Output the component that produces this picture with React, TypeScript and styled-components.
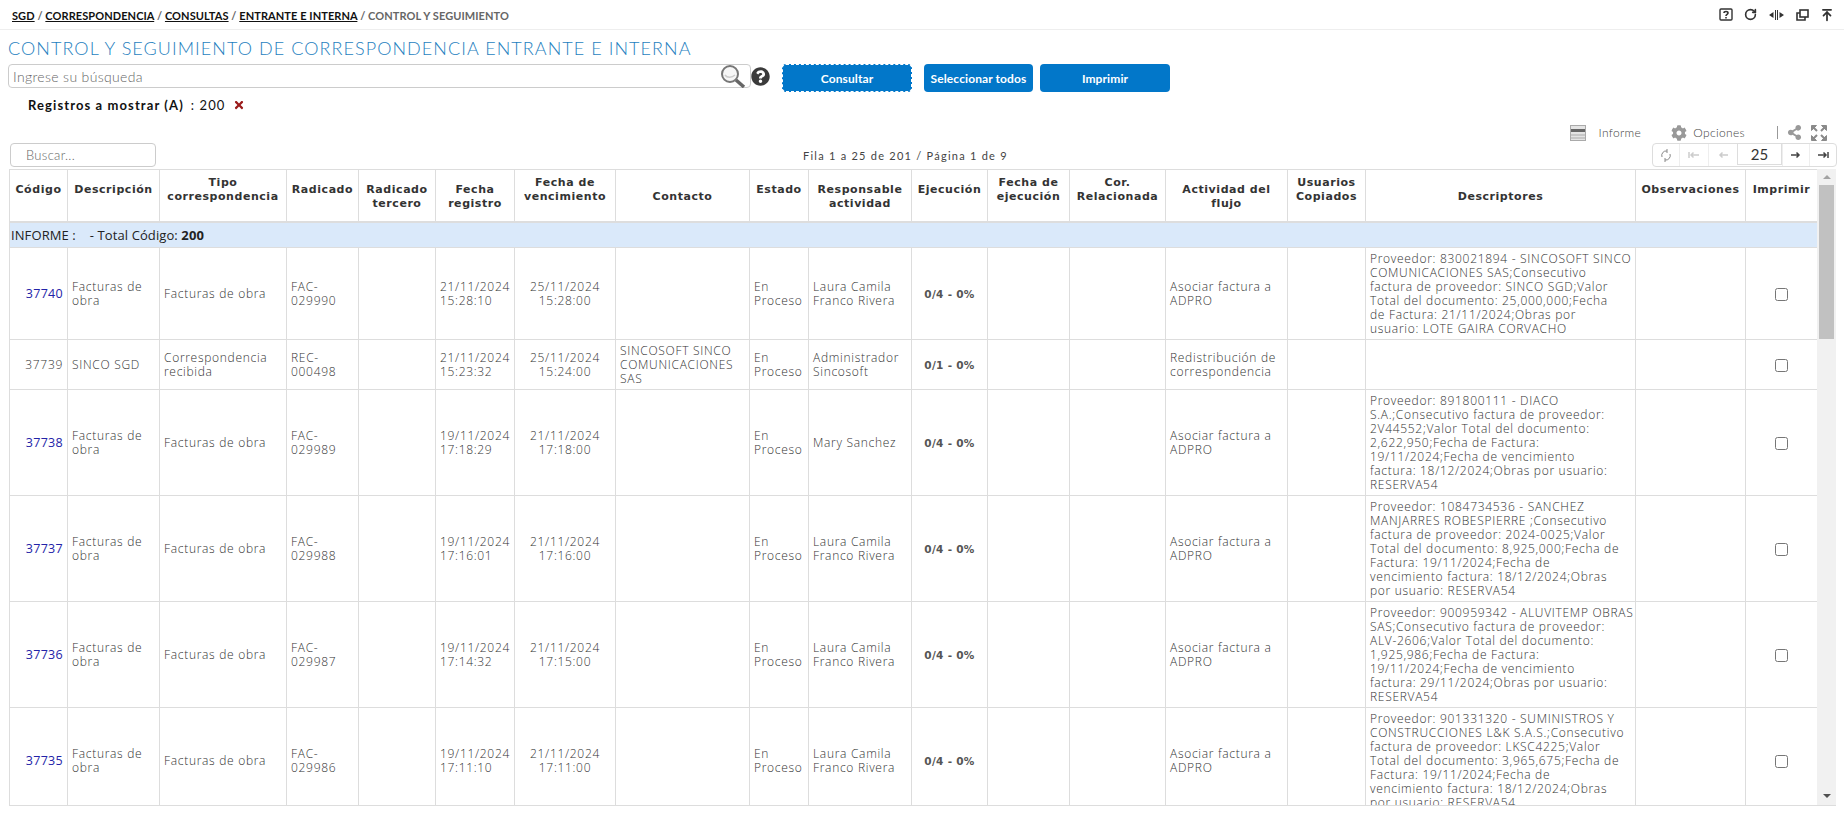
import {Fragment} from "react";
import styled, {createGlobalStyle} from "styled-components";
import {FaCog, FaQuestionCircle, FaShareAlt, FaTimes} from "react-icons/fa";
import {ArrowUpToLine, RotateCw} from "lucide-react";

const GlobalStyle = createGlobalStyle`
  html, body {
    margin: 0;
    padding: 0;
    background: #fff;
    font-family: "Lato", "Liberation Sans", sans-serif;
    color: #555;
  }
`;

const Page = styled.div`
  width: 1844px;
  height: 825px;
  overflow: hidden;
`;

const TopBar = styled.div`
  height: 29px;
  border-bottom: 1px solid #eee;
  padding: 0 10px 0 12px;
  display: flex;
  align-items: center;
  justify-content: space-between;
`;

const Crumbs = styled.div`
  font-size: 11px;
  font-weight: 700;
  color: #666;
  padding-top: 2px;
  letter-spacing: 0.08px;
  a {
    color: #111;
    text-decoration: underline;
  }
`;

const TopIcons = styled.div`
  display: flex;
  align-items: center;
  gap: 11px;
  color: #333;
  svg {
    display: block;
  }
`;

const Title = styled.h1`
  margin: 0;
  padding: 7px 0 0 8px;
  height: 27px;
  font-size: 18px;
  line-height: 22px;
  font-weight: 300;
  color: #1f7fc0;
  letter-spacing: 1.06px;
`;

const SearchRow = styled.div`
  display: flex;
  align-items: flex-start;
  padding: 0 0 0 8px;
`;

const SearchBox = styled.div`
  width: 743px;
  height: 24px;
  box-sizing: border-box;
  border: 1px solid #ccc;
  border-radius: 4px;
  display: flex;
  align-items: center;
  justify-content: space-between;
  padding: 0 3px 0 4px;
  font-size: 14px;
  font-weight: 300;
  letter-spacing: 0.35px;
  color: #666;
`;

const HelpBadge = styled.span`
  width: 19px;
  margin: 3px 12px 0 0;
  color: #3b3b3b;
  display: flex;
  svg {
    display: block;
  }
`;

const ActionButton = styled.button<{$focused?: boolean; $w: number; $gap: number}>`
  width: ${p => p.$w}px;
  height: 28px;
  margin-left: ${p => p.$gap}px;
  box-sizing: border-box;
  border: ${p => (p.$focused ? "1px dashed #fff" : "none")};
  border-radius: 4px;
  background: #0277c9;
  color: #fff;
  font-family: "Lato", sans-serif;
  font-size: 12px;
  font-weight: 700;
  letter-spacing: 0.1px;
  padding: 0;
`;

const Registros = styled.div`
  height: 28px;
  padding: 0 0 0 28px;
  display: flex;
  align-items: center;
  gap: 7px;
  font-size: 13px;
  letter-spacing: 1.1px;
  color: #111;
  margin-top: -1px;
  b {
    font-weight: 700;
  }
  svg {
    color: #9b1c1c;
  }
`;

const ToolRow = styled.div`
  height: 21px;
  margin-top: 3px;
  display: flex;
  align-items: center;
  justify-content: flex-end;
  padding-right: 17px;
  font-size: 12px;
  font-weight: 300;
  letter-spacing: 0.35px;
  color: #444;
`;

const ToolLabel = styled.span<{$gap: number}>`
  margin-left: ${p => p.$gap}px;
`;

const ToolIcon = styled.span<{$gap: number}>`
  margin-left: ${p => p.$gap}px;
  display: flex;
  color: #999;
  svg {
    display: block;
  }
`;

const ToolDivider = styled.span`
  width: 1px;
  height: 13px;
  background: #999;
  margin-left: 32px;
`;

const FilterRow = styled.div`
  height: 26px;
  padding: 0 7px 0 10px;
  display: flex;
  align-items: flex-start;
`;

const FilterBox = styled.div`
  width: 146px;
  height: 24px;
  box-sizing: border-box;
  border: 1px solid #ccc;
  border-radius: 4px;
  padding-left: 15px;
  font-size: 13px;
  font-weight: 300;
  line-height: 23px;
  letter-spacing: 0.3px;
  color: #666;
`;

const RowInfo = styled.div`
  margin-left: 647px;
  width: 210px;
  font-size: 11px;
  line-height: 26px;
  letter-spacing: 1.25px;
  color: #444;
  white-space: nowrap;
`;

const Pager = styled.div`
  margin-left: auto;
  display: flex;
  align-items: stretch;
  height: 24px;
  box-sizing: border-box;
  border: 1px solid #ddd;
  border-radius: 4px;
`;

const PagerBtn = styled.span<{$w: number; $dim?: boolean}>`
  width: ${p => p.$w}px;
  display: flex;
  align-items: center;
  justify-content: center;
  border-left: 1px solid #eee;
  color: ${p => (p.$dim ? "#ccc" : "#444")};
  &:first-child {
    border-left: none;
  }
`;

const PagerInput = styled.span`
  width: 45px;
  margin: -1px 0 1px;
  box-sizing: border-box;
  border: 1px solid #ddd;
  font-size: 15px;
  line-height: 21px;
  text-align: center;
  color: #333;
  background: #fff;
`;

const TableShell = styled.div`
  margin-left: 9px;
  width: 1827px;
  height: 637px;
  display: flex;
  border-bottom: 1px solid #ddd;
  box-sizing: border-box;
`;

const Viewport = styled.div`
  width: 1808px;
  overflow: hidden;
`;

const Grid = styled.table`
  width: 1808px;
  table-layout: fixed;
  border-collapse: collapse;
  border: 1px solid #ddd;
`;

const HeadCell = styled.th<{$raised?: boolean}>`
  height: 52px;
  box-sizing: border-box;
  border: 1px solid #ddd;
  border-bottom-width: 2px;
  padding: ${p => (p.$raised ? "0 1px 11px" : "4px 1px 0")};
  font-family: "DejaVu Sans", sans-serif;
  font-size: 11px;
  line-height: 14px;
  font-weight: 700;
  letter-spacing: 0.55px;
  color: #333;
  text-align: center;
  white-space: pre-line;
`;

const GroupCell = styled.td`
  height: 26px;
  box-sizing: border-box;
  background: #dae9fa;
  border: 1px solid #ddd;
  padding: 0 0 0 1px;
  font-family: "Open Sans", sans-serif;
  font-size: 13px;
  letter-spacing: 0.1px;
  color: #222;
  b {
    font-weight: 700;
  }
`;

const Cell = styled.td<{$align?: string; $mono?: boolean}>`
  border: 1px solid #ddd;
  padding: 4px 4px 3px;
  font-family: "Open Sans", sans-serif;
  font-size: 12px;
  font-weight: 300;
  line-height: 14px;
  letter-spacing: 0.7px;
  color: #333;
  vertical-align: middle;
  text-align: ${p => p.$align || "left"};
  white-space: pre;
  ${p => p.$mono && `
    font-family: "DejaVu Sans", sans-serif;
    font-size: 10.5px;
    font-weight: 700;
    letter-spacing: 0.3px;
    color: #555;
  `}
`;

const CodeLink = styled.a`
  color: #2323a8;
  font-size: 12.5px;
  font-weight: 400;
  letter-spacing: 0.3px;
`;

const Check = styled.input`
  width: 13px;
  height: 13px;
  margin: 0;
  vertical-align: middle;
`;

const Scrollbar = styled.div`
  width: 19px;
  background: #f1f1f1;
  display: flex;
  flex-direction: column;
  align-items: center;
`;

const ScrollArrow = styled.div<{$down?: boolean}>`
  flex: none;
  width: 0;
  height: 0;
  margin: ${p => (p.$down ? "auto 0 7px" : "6px 0 6px")};
  border-left: 4px solid transparent;
  border-right: 4px solid transparent;
  ${p => (p.$down ? "border-top: 4px solid #505050;" : "border-bottom: 4px solid #a3a3a3;")}
`;

const ScrollThumb = styled.div`
  width: 15px;
  height: 154px;
  background: #c1c1c1;
`;

const widths = [58, 92, 127, 72, 77, 79, 101, 134, 59, 103, 76, 82, 96, 122, 78, 270, 110, 72];

const headers: {label: string; raised?: boolean}[] = [
	{label: "Código", raised: true},
	{label: "Descripción", raised: true},
	{label: "Tipo\ncorrespondencia", raised: true},
	{label: "Radicado", raised: true},
	{label: "Radicado\ntercero"},
	{label: "Fecha\nregistro"},
	{label: "Fecha de\nvencimiento", raised: true},
	{label: "Contacto"},
	{label: "Estado", raised: true},
	{label: "Responsable\nactividad"},
	{label: "Ejecución", raised: true},
	{label: "Fecha de\nejecución", raised: true},
	{label: "Cor.\nRelacionada", raised: true},
	{label: "Actividad del\nflujo"},
	{label: "Usuarios\nCopiados", raised: true},
	{label: "Descriptores"},
	{label: "Observaciones", raised: true},
	{label: "Imprimir", raised: true},
];

const rows = [
	{
		code: "37740", link: true, desc: "Facturas de\nobra", tipo: "Facturas de obra", rad: "FAC-\n029990",
		reg: "21/11/2024\n15:28:10", ven: "25/11/2024\n15:28:00", contacto: "", resp: "Laura Camila\nFranco Rivera", eje: "0/4 - 0%",
		act: "Asociar factura a\nADPRO",
		descr: "Proveedor: 830021894 - SINCOSOFT SINCO\nCOMUNICACIONES SAS;Consecutivo\nfactura de proveedor: SINCO SGD;Valor\nTotal del documento: 25,000,000;Fecha\nde Factura: 21/11/2024;Obras por\nusuario: LOTE GAIRA CORVACHO",
	},
	{
		code: "37739", link: false, desc: "SINCO SGD", tipo: "Correspondencia\nrecibida", rad: "REC-\n000498",
		reg: "21/11/2024\n15:23:32", ven: "25/11/2024\n15:24:00", contacto: "SINCOSOFT SINCO\nCOMUNICACIONES\nSAS", resp: "Administrador\nSincosoft", eje: "0/1 - 0%",
		act: "Redistribución de\ncorrespondencia",
		descr: "",
	},
	{
		code: "37738", link: true, desc: "Facturas de\nobra", tipo: "Facturas de obra", rad: "FAC-\n029989",
		reg: "19/11/2024\n17:18:29", ven: "21/11/2024\n17:18:00", contacto: "", resp: "Mary Sanchez", eje: "0/4 - 0%",
		act: "Asociar factura a\nADPRO",
		descr: "Proveedor: 891800111 - DIACO\nS.A.;Consecutivo factura de proveedor:\n2V44552;Valor Total del documento:\n2,622,950;Fecha de Factura:\n19/11/2024;Fecha de vencimiento\nfactura: 18/12/2024;Obras por usuario:\nRESERVA54",
	},
	{
		code: "37737", link: true, desc: "Facturas de\nobra", tipo: "Facturas de obra", rad: "FAC-\n029988",
		reg: "19/11/2024\n17:16:01", ven: "21/11/2024\n17:16:00", contacto: "", resp: "Laura Camila\nFranco Rivera", eje: "0/4 - 0%",
		act: "Asociar factura a\nADPRO",
		descr: "Proveedor: 1084734536 - SANCHEZ\nMANJARRES ROBESPIERRE ;Consecutivo\nfactura de proveedor: 2024-0025;Valor\nTotal del documento: 8,925,000;Fecha de\nFactura: 19/11/2024;Fecha de\nvencimiento factura: 18/12/2024;Obras\npor usuario: RESERVA54",
	},
	{
		code: "37736", link: true, desc: "Facturas de\nobra", tipo: "Facturas de obra", rad: "FAC-\n029987",
		reg: "19/11/2024\n17:14:32", ven: "21/11/2024\n17:15:00", contacto: "", resp: "Laura Camila\nFranco Rivera", eje: "0/4 - 0%",
		act: "Asociar factura a\nADPRO",
		descr: "Proveedor: 900959342 - ALUVITEMP OBRAS\nSAS;Consecutivo factura de proveedor:\nALV-2606;Valor Total del documento:\n1,925,986;Fecha de Factura:\n19/11/2024;Fecha de vencimiento\nfactura: 29/11/2024;Obras por usuario:\nRESERVA54",
	},
	{
		code: "37735", link: true, desc: "Facturas de\nobra", tipo: "Facturas de obra", rad: "FAC-\n029986",
		reg: "19/11/2024\n17:11:10", ven: "21/11/2024\n17:11:00", contacto: "", resp: "Laura Camila\nFranco Rivera", eje: "0/4 - 0%",
		act: "Asociar factura a\nADPRO",
		descr: "Proveedor: 901331320 - SUMINISTROS Y\nCONSTRUCCIONES L&K S.A.S.;Consecutivo\nfactura de proveedor: LKSC4225;Valor\nTotal del documento: 3,965,675;Fecha de\nFactura: 19/11/2024;Fecha de\nvencimiento factura: 18/12/2024;Obras\npor usuario: RESERVA54",
	},
];

function HelpSquareIcon() {
	return (
		<svg width="14" height="13" viewBox="0 0 14 13" fill="none" stroke="#333">
			<rect x="1" y="1" width="12" height="11" rx="1" strokeWidth="1.4" />
			<path d="M5 5c0-2 4-2 4 0 0 1.300-2 1.300-2 3" strokeWidth="1.6" />
			<path d="M7 9v1.500" strokeWidth="1.600" />
		</svg>
	);
}

function ColumnsIcon() {
	return (
		<svg width="17" height="12" viewBox="0 0 17 12" fill="#333">
			<path d="M7 1h1v10H7zM9 1h1v10H9zM5.500 3v6L1 6zM11.500 3v6L16 6z" />
		</svg>
	);
}

function WindowIcon() {
	return (
		<svg width="13" height="12" viewBox="0 0 13 12" fill="none" stroke="#333" strokeWidth="1.6">
			<rect x="4" y="1" width="8" height="7" />
			<path d="M4 4H1v7h8V8" />
		</svg>
	);
}

function MagnifierIcon() {
	return (
		<svg width="27" height="24" viewBox="0 0 27 24" fill="none">
			<circle cx="10" cy="10" r="8" stroke="#777" strokeWidth="2" fill="#f7f7f7" />
			<path d="M5 11c2 3 7 3 10 0" stroke="#ccc" strokeWidth="1.500" />
			<path d="M16 16l8 7" stroke="#666" strokeWidth="3.500" />
		</svg>
	);
}

function ReportIcon() {
	return (
		<svg width="16" height="16" viewBox="0 0 16 16">
			<rect x="0.500" y="0.500" width="15" height="15" fill="#e4e4e4" stroke="#aaa" />
			<rect x="1" y="4" width="14" height="3" fill="#666" />
			<path d="M1 10h14M1 13h14" stroke="#aaa" />
		</svg>
	);
}

function ExpandIcon() {
	return (
		<svg width="16" height="16" viewBox="0 0 16 16" fill="#8a8a8a" stroke="#8a8a8a">
			<path d="M0.500 0.500h5l-5 5zM15.500 0.500v5l-5-5zM0.500 15.500v-5l5 5zM15.500 15.500h-5l5-5z" strokeWidth="1" />
			<path d="M3 3l3 3M13 3l-3 3M3 13l3-3M13 13l-3-3" strokeWidth="2" />
		</svg>
	);
}

function PagerArrow({dir, stop}: {dir: "left" | "right"; stop?: boolean}) {
	const d = dir === "left" ? "M11 5H3M5.500 2.500 3 5l2.500 2.500" : "M1 5h8M6.500 2.500 9 5 6.500 7.500";
	return (
		<svg width="12" height="10" viewBox="0 0 12 10" fill="none" stroke="currentColor" strokeWidth="1.500">
			<path d={d} />
			{stop && <path d={dir === "left" ? "M1 2v6" : "M11 2v6"} />}
		</svg>
	);
}

function SyncIcon() {
	return (
		<svg width="12" height="13" viewBox="0 0 12 13" fill="none" stroke="#888" strokeWidth="1">
			<path d="M2 8a4.500 4.500 0 0 1 5-6M10 5a4.500 4.500 0 0 1-5 6" />
			<path d="M7 0v4M5 9v4" />
		</svg>
	);
}

export default function App() {
	return (
		<Page>
			<GlobalStyle />
			<TopBar>
				<Crumbs>
					<a>SGD</a> / <a>CORRESPONDENCIA</a> / <a>CONSULTAS</a> / <a>ENTRANTE E INTERNA</a> / CONTROL Y SEGUIMIENTO
				</Crumbs>
				<TopIcons>
					<HelpSquareIcon />
					<RotateCw size={13} strokeWidth={3} />
					<ColumnsIcon />
					<WindowIcon />
					<ArrowUpToLine size={14} strokeWidth={3} />
				</TopIcons>
			</TopBar>
			<Title>CONTROL Y SEGUIMIENTO DE CORRESPONDENCIA ENTRANTE E INTERNA</Title>
			<SearchRow>
				<SearchBox>
					Ingrese su búsqueda
					<MagnifierIcon />
				</SearchBox>
				<HelpBadge><FaQuestionCircle size={19} /></HelpBadge>
				<ActionButton $focused $w={130} $gap={0}>Consultar</ActionButton>
				<ActionButton $w={109} $gap={12}>Seleccionar todos</ActionButton>
				<ActionButton $w={130} $gap={7}>Imprimir</ActionButton>
			</SearchRow>
			<Registros>
				<b>Registros a mostrar (A)</b> : 200 <FaTimes size={12} />
			</Registros>
			<ToolRow>
				<ReportIcon />
				<ToolLabel $gap={13}>Informe</ToolLabel>
				<ToolIcon $gap={30}><FaCog size={16} /></ToolIcon>
				<ToolLabel $gap={6}>Opciones</ToolLabel>
				<ToolDivider />
				<ToolIcon $gap={9}><FaShareAlt size={15} /></ToolIcon>
				<ToolIcon $gap={9}><ExpandIcon /></ToolIcon>
			</ToolRow>
			<FilterRow>
				<FilterBox>Buscar...</FilterBox>
				<RowInfo>Fila 1 a 25 de 201 / Página 1 de 9</RowInfo>
				<Pager>
					<PagerBtn $w={26}><SyncIcon /></PagerBtn>
					<PagerBtn $w={28} $dim><PagerArrow dir="left" stop /></PagerBtn>
					<PagerBtn $w={28} $dim><PagerArrow dir="left" /></PagerBtn>
					<PagerInput>25</PagerInput>
					<PagerBtn $w={26}><PagerArrow dir="right" /></PagerBtn>
					<PagerBtn $w={26}><PagerArrow dir="right" stop /></PagerBtn>
				</Pager>
			</FilterRow>
			<TableShell>
				<Viewport>
					<Grid>
						<colgroup>
							{widths.map((w, i) => <col key={i} style={{width: w}} />)}
						</colgroup>
						<thead>
							<tr>
								{headers.map(h => <HeadCell key={h.label} $raised={h.raised}>{h.label}</HeadCell>)}
							</tr>
						</thead>
						<tbody>
							<tr>
								<GroupCell colSpan={18}>INFORME : &nbsp;&nbsp; - Total Código: <b>200</b></GroupCell>
							</tr>
							{rows.map(r => (
								<Fragment key={r.code}>
									<tr>
										<Cell $align="right">{r.link ? <CodeLink>{r.code}</CodeLink> : r.code}</Cell>
										<Cell>{r.desc}</Cell>
										<Cell>{r.tipo}</Cell>
										<Cell>{r.rad}</Cell>
										<Cell />
										<Cell>{r.reg}</Cell>
										<Cell $align="center">{r.ven}</Cell>
										<Cell>{r.contacto}</Cell>
										<Cell>{"En\nProceso"}</Cell>
										<Cell>{r.resp}</Cell>
										<Cell $align="center" $mono>{r.eje}</Cell>
										<Cell />
										<Cell />
										<Cell>{r.act}</Cell>
										<Cell />
										<Cell>{r.descr}</Cell>
										<Cell />
										<Cell $align="center"><Check type="checkbox" /></Cell>
									</tr>
								</Fragment>
							))}
						</tbody>
					</Grid>
				</Viewport>
				<Scrollbar>
					<ScrollArrow />
					<ScrollThumb />
					<ScrollArrow $down />
				</Scrollbar>
			</TableShell>
		</Page>
	);
}
